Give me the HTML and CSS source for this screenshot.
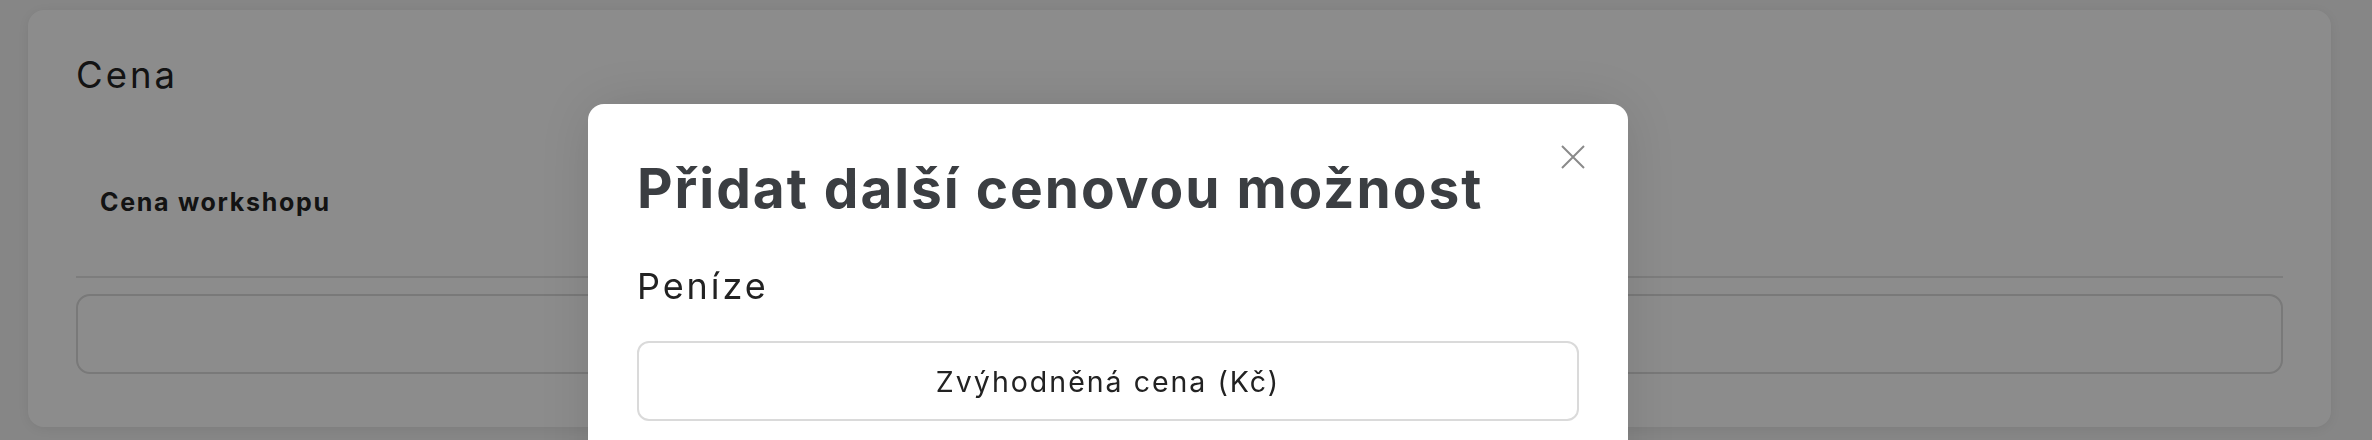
FILE: index.html
```html
<!DOCTYPE html>
<html lang="cs">
<head>
<meta charset="utf-8">
<title>Cena</title>
<link rel="stylesheet" href="styles.css">
</head>
<body>
  <main class="page">
    <section class="card">
      <h2 class="card-title">Cena</h2>
      <div class="price-row">
        <span class="price-label">Cena workshopu</span>
      </div>
      <div class="divider"></div>
      <div class="input-box"></div>
    </section>
  </main>

  <div class="overlay">
    <div class="modal" role="dialog" aria-labelledby="modal-title">
      <button class="close" aria-label="Zavřít">
        <svg viewBox="0 0 24 24" width="24" height="24" aria-hidden="true">
          <path d="M1 1 L23 23 M23 1 L1 23" stroke="#8a8a8a" stroke-width="2" fill="none"/>
        </svg>
      </button>
      <h1 id="modal-title" class="modal-title">Přidat další cenovou možnost</h1>
      <h3 class="section-title">Peníze</h3>
      <button class="option">Zvýhodněná cena (Kč)</button>
    </div>
  </div>
</body>
</html>
```

FILE: styles.css
```css
* { box-sizing: border-box; }

html, body {
  margin: 0;
  padding: 0;
  height: 100%;
  overflow: hidden;
}

body {
  background: #f5f5f5;
  font-family: Inter, "Noto Sans", sans-serif;
  color: #242424;
}

.page {
  padding: 10px 41px 13px 28px;
}

.card {
  background: #ffffff;
  border-radius: 16px;
  box-shadow: 0 2px 14px rgba(0, 0, 0, 0.08);
  padding: 43px 48px 54px 48px;
  height: 417px;
}

.card-title {
  margin: 0;
  font-size: 36.5px;
  font-weight: 400;
  line-height: 44px;
  letter-spacing: 3px;
  color: #242424;
}

.price-row {
  padding: 0 24px;
  margin-top: 90px;
  height: 89px;
}

.price-label {
  font-size: 25px;
  font-weight: 700;
  line-height: 30px;
  letter-spacing: 1.7px;
  color: #242424;
}

.divider {
  height: 2px;
  background: #e3e3e3;
}

.input-box {
  margin-top: 16px;
  height: 80px;
  border: 2px solid #dcdcdc;
  border-radius: 14px;
}

.overlay {
  position: fixed;
  inset: 0;
  background: rgba(0, 0, 0, 0.45);
}

.modal {
  position: absolute;
  left: 588px;
  top: 104px;
  width: 1040px;
  height: 520px;
  background: #ffffff;
  border-radius: 16px;
  box-shadow: 0 0 60px rgba(0, 0, 0, 0.12);
  padding: 51px 49px 48px 49px;
  display: flex;
  flex-direction: column;
}

.close {
  position: absolute;
  top: 41px;
  right: 43px;
  width: 24px;
  height: 24px;
  padding: 0;
  border: 0;
  background: none;
}

.close svg { display: block; }

.modal-title {
  margin: 0;
  font-size: 55px;
  font-weight: 700;
  line-height: 66px;
  letter-spacing: 1.95px;
  color: #3b3e42;
}

.section-title {
  margin: 43px 0 0 0;
  font-size: 36px;
  font-weight: 400;
  line-height: 44px;
  letter-spacing: 2.9px;
  color: #222222;
}

.option {
  margin-top: 33px;
  height: 80px;
  width: 100%;
  background: #ffffff;
  border: 2px solid #dadada;
  border-radius: 12px;
  font-family: Inter, "Noto Sans", sans-serif;
  font-size: 28.5px;
  font-weight: 400;
  letter-spacing: 2px;
  color: #222222;
}
```
